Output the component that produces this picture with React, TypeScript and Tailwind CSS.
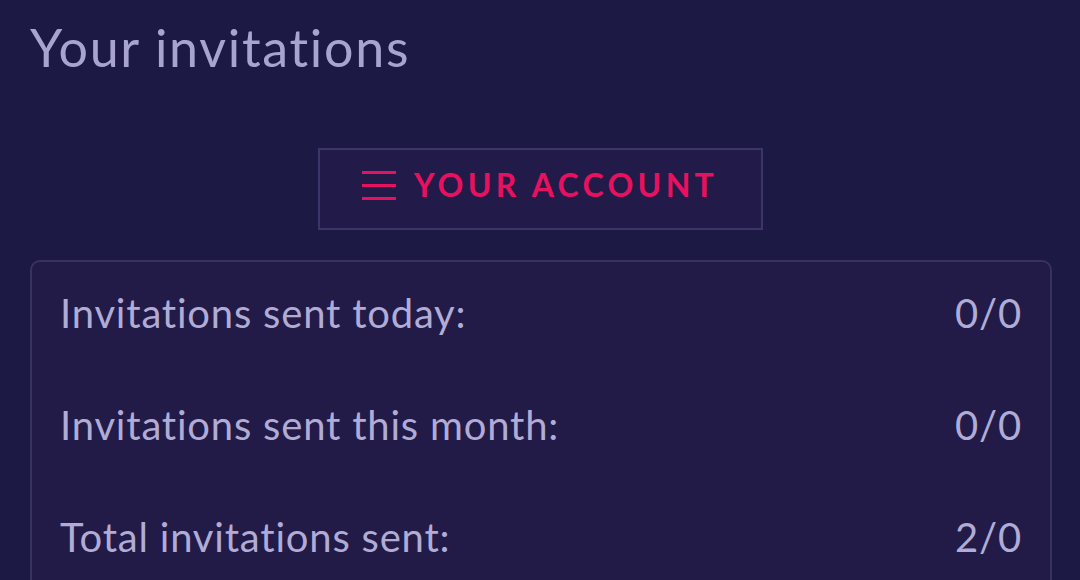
const rows = [
  { label: "Invitations sent today:", value: "0/0" },
  { label: "Invitations sent this month:", value: "0/0" },
  { label: "Total invitations sent:", value: "2/0" },
];

const App = () => {
  return (
    <div
      className="h-[580px] w-[1080px] overflow-hidden bg-[#1c1945] pl-[30px] pr-[28px]"
      style={{ fontFamily: "Lato, 'Open Sans', sans-serif" }}
    >
      <h1 className="pt-[19px] text-[52px] leading-[56px] tracking-[1.7px] text-[#a8a4cf]">
        Your invitations
      </h1>

      <div className="mt-[73px] flex justify-center pr-[2px]">
        <button className="flex h-[82px] w-[445px] items-center justify-center gap-[18px] border-2 border-[#3b3668] bg-[#221b49] pb-[8px]">
          <div className="flex w-[34px] flex-col gap-[10px]">
            <div className="h-[3px] bg-[#e8115f]" />
            <div className="h-[3px] bg-[#e8115f]" />
            <div className="h-[3px] bg-[#e8115f]" />
          </div>
          <span className="text-[32px] font-bold leading-[36px] tracking-[4.3px] text-[#e8115f]">
            YOUR ACCOUNT
          </span>
        </button>
      </div>

      <div className="mt-[30px] rounded-[10px] border-2 border-[#38325f] bg-[#221b48] px-[28px]">
        {rows.map((r) => (
          <div
            key={r.label}
            className="flex h-[112px] items-center justify-between pb-[10px] text-[40px] tracking-[0.8px] text-[#b0acd6]"
          >
            <span>{r.label}</span>
            <span>{r.value}</span>
          </div>
        ))}
      </div>
    </div>
  );
};

export default App;
